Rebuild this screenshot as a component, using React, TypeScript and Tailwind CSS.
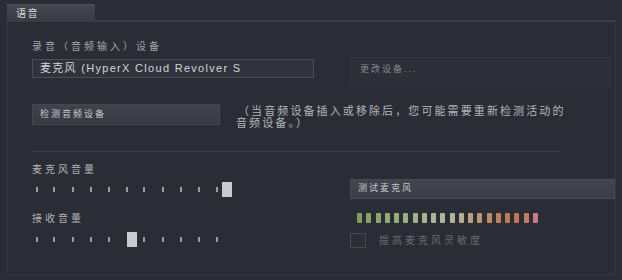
import React from "react";

const meterColors = [
  "#7f9f5c", "#86a563", "#8aa86a", "#8fab70", "#94ad77", "#99b07e", "#9fb287",
  "#a5b48f", "#aab596", "#aeb59a", "#b3b39a", "#b8ab8e", "#bba07f", "#bc9470",
  "#bd8a65", "#bd805d", "#bf7858", "#c07558", "#c27a6a", "#c77b88",
];

function Slider({ thumb, ticks }: { thumb: number; ticks: number[] }) {
  return (
    <div className="relative h-[15px] w-[200px]">
      {ticks.map((x, i) => (
        <div
          key={i}
          className="absolute top-[5px] h-[5px] w-[2px] bg-[#9a9ca2]"
          style={{ left: x }}
        />
      ))}
      <div
        className="absolute top-0 h-[15px] w-[10px] bg-[#c9cbd1]"
        style={{ left: thumb }}
      />
    </div>
  );
}

export default function App() {
  const font = {
    fontFamily: '"Liberation Sans", "Noto Sans CJK SC", sans-serif',
  };
  return (
    <div
      className="w-[622px] h-[280px] bg-[#2a2d35] overflow-hidden flex flex-col"
      style={font}
    >
      {/* tab row */}
      <div className="flex h-[22px] items-end">
        <div className="w-[7px] h-full" />
        <div className="w-[88px] h-[18px] bg-gradient-to-b from-[#44474f] to-[#383b43] border-t border-[#50535b] flex items-center pl-[9px] text-[10px] tracking-[1.5px] text-[#d6d7da]">
          语音
        </div>
        <div className="flex-1 h-full border-b-[2px] border-[#3a3d46]" />
        <div className="w-[6px]" />
      </div>

      {/* panel */}
      <div className="ml-[7px] w-[609px] h-[253px] border-l border-r border-b border-[#33363e] pl-[24px] flex flex-col">
        <div className="mt-[19px] text-[10px] leading-[12px] tracking-[3px] text-[#a3a6ab]">
          录音（音频输入）设备
        </div>

        <div className="flex mt-[4px]">
          <div className="mt-[2px] w-[282px] h-[19px] bg-[#30333b] border border-[#4a4d55] flex items-center pl-[7px] text-[11px] tracking-[1.3px] text-[#d3d4d7] whitespace-nowrap overflow-hidden">
            麦克风 (HyperX Cloud Revolver S
          </div>
          <div className="ml-[36px] w-[261px] h-[29px] bg-[#2d3038] border border-[#30333b] flex items-start pt-[5px] pl-[9px] text-[9px] tracking-[2px] text-[#85888e]">
            更改设备...
          </div>
        </div>

        <div className="flex mt-[18px]">
          <div className="w-[188px] h-[21px] bg-gradient-to-b from-[#40434c] to-[#373a43] border border-[#44474f] flex items-center pl-[7px] text-[9px] tracking-[2px] text-[#c9cacd]">
            检测音频设备
          </div>
          <div className="ml-[18px] mt-[1px] text-[11px] leading-[12px] tracking-[2.1px] text-[#b3b5b9]">
            <div>（当音频设备插入或移除后，您可能需要重新检测活动的</div>
            <div className="-ml-[2px]">音频设备。）</div>
          </div>
        </div>

        <div className="mt-[22px] w-[528px] h-px bg-[#3b3e46]" />

        <div className="flex mt-[12px]">
          <div className="w-[318px] flex flex-col">
            <div className="text-[10px] leading-[12px] tracking-[3px] text-[#b0b2b6]">
              麦克风音量
            </div>
            <div className="mt-[6px]">
              <Slider
                thumb={190}
                ticks={[4, 21, 40, 58, 76, 94, 111, 130, 148, 166, 184]}
              />
            </div>
            <div className="mt-[16px] text-[10px] leading-[12px] tracking-[3px] text-[#b0b2b6]">
              接收音量
            </div>
            <div className="mt-[7px]">
              <Slider
                thumb={95}
                ticks={[4, 21, 40, 58, 76, 111, 130, 148, 166, 184]}
              />
            </div>
          </div>
          <div className="flex flex-col">
            <div className="mt-[15px] w-[265px] h-[20px] bg-gradient-to-b from-[#42454e] to-[#3a3d46] border border-[#474a52] flex items-center pl-[7px] text-[9px] tracking-[2px] text-[#c6c7ca]">
              测试麦克风
            </div>
            <div className="flex mt-[14px] ml-[7px] gap-[4.25px]">
              {meterColors.map((c, i) => (
                <div
                  key={i}
                  className="w-[5px] h-[10px] rounded-[1px]"
                  style={{ backgroundColor: c }}
                />
              ))}
            </div>
            <div className="flex items-center mt-[10px]">
              <div className="w-[16px] h-[15px] border border-[#464950] bg-[#2c2f37]" />
              <div className="ml-[13px] text-[10px] tracking-[3px] text-[#686b71]">
                提高麦克风灵敏度
              </div>
            </div>
          </div>
        </div>
      </div>
    </div>
  );
}
